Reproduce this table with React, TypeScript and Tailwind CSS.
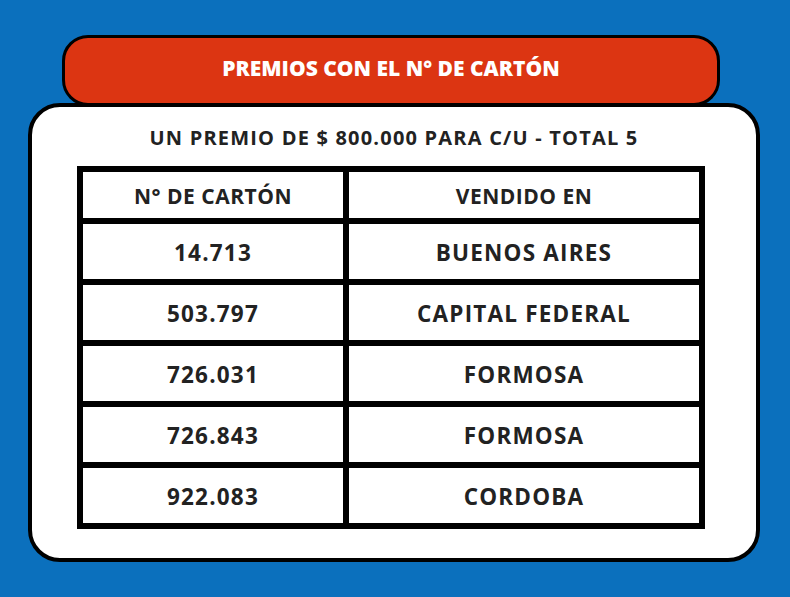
const rows = [
  { carton: "14.713", lugar: "BUENOS AIRES" },
  { carton: "503.797", lugar: "CAPITAL FEDERAL" },
  { carton: "726.031", lugar: "FORMOSA" },
  { carton: "726.843", lugar: "FORMOSA" },
  { carton: "922.083", lugar: "CORDOBA" },
];

const App = () => {
  return (
    <div
      className="w-[790px] h-[597px] bg-[#0b70bd] pt-[35px] overflow-hidden"
      style={{ fontFamily: '"Open Sans", "Noto Sans", sans-serif' }}
    >
      {/* Header pill */}
      <div className="relative z-10 ml-[62px] w-[658px] h-[71px] rounded-[26px] border-[3px] border-black bg-[#dc3512] flex items-center justify-center">
        <h1 className="text-white text-[21px] font-extrabold pb-[3px]">PREMIOS CON EL N° DE CARTÓN</h1>
      </div>

      {/* Card */}
      <div className="-mt-[3px] ml-[28px] w-[732px] h-[459px] rounded-[32px] border-4 border-black bg-white">
        <p className="pt-[18px] h-[59px] text-center text-[20px] leading-[26px] font-bold tracking-[1.2px] text-[#222]">
          UN PREMIO DE $ 800.000 PARA C/U - TOTAL 5
        </p>

        {/* Table */}
        <div className="ml-[45px] w-[628px] grid grid-cols-[260px_350px] gap-[6px] p-[6px] bg-black text-[#222] font-bold">
          <div className="h-[46px] pt-[3px] bg-white flex items-center justify-center text-[21px] tracking-[0.5px]">N° DE CARTÓN</div>
          <div className="h-[46px] pt-[3px] bg-white flex items-center justify-center text-[21px] tracking-[0.5px]">VENDIDO EN</div>
          {rows.map((r, i) => (
            <Row key={i} carton={r.carton} lugar={r.lugar} />
          ))}
        </div>
      </div>
    </div>
  );
};

const Row = ({ carton, lugar }: { carton: string; lugar: string }) => (
  <>
    <div className="h-[55px] pt-[3px] bg-white flex items-center justify-center text-[22.5px] tracking-[1.2px]">{carton}</div>
    <div className="h-[55px] pt-[3px] bg-white flex items-center justify-center text-[22.5px] tracking-[1.2px]">{lugar}</div>
  </>
);

export default App;
